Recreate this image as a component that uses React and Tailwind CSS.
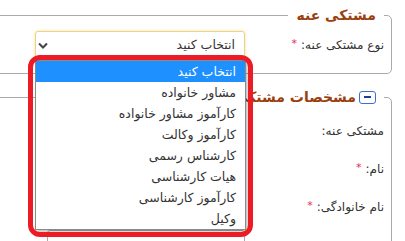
import React from 'react';

const options = [
  'انتخاب کنید',
  'مشاور خانواده',
  'کارآموز مشاور خانواده',
  'کارآموز وکالت',
  'کارشناس رسمی',
  'هیات کارشناسی',
  'کارآموز کارشناسی',
  'وکیل',
];

const Star = () => <span className="text-[#e8285a] text-[11px] mr-1 align-top">*</span>;

const Row = ({ label, required, children }) => (
  <div className="flex items-center h-[30px]">
    <div className="w-[139px] shrink-0 text-[12px] text-[#333]">
      {label}
      {required && <Star />}
    </div>
    {children}
  </div>
);

const App = () => {
  return (
    <div dir="rtl" className="relative w-[405px] h-[241px] overflow-hidden bg-white font-['DejaVu_Sans',sans-serif]">
      <div className="pt-[5px] pr-[13px] -ml-[20px]">
        {/* complainee type */}
        <fieldset className="border border-[#aaa] rounded-[5px] pr-[7px] pb-[14px]">
          <legend className="px-2 h-5 leading-5 text-[14px] font-bold text-[#9a400e]">مشتکی عنه</legend>
          <div className="mt-[6px] flex items-center h-[28px]">
            <div className="w-[139px] shrink-0 text-[12px] text-[#333]">
              نوع مشتکی عنه:
              <Star />
            </div>
            <div className="w-[210px] h-[28px] border border-[#e9d38f] rounded-[3px] shadow-[0_0_3px_#f7dc84] flex items-center justify-between pr-[9px] pl-[2px] text-[12.5px] text-[#333]">
              <span>انتخاب کنید</span>
              <svg width="10" height="7" viewBox="0 0 10 7" className="text-[#444]">
                <path d="M1 1.5 L5 5.5 L9 1.5" fill="none" stroke="currentColor" strokeWidth="2" />
              </svg>
            </div>
          </div>
        </fieldset>

        {/* complainee details */}
        <fieldset className="mt-[13px] border border-[#aaa] rounded-[5px] pr-[7px] pb-4">
          <legend className="px-2 h-5 flex items-center gap-[3px] text-[14px] font-bold text-[#9a400e]">
            <span className="w-[17px] h-[13px] border-[1.5px] border-[#3a6fd0] rounded-[3px] flex items-center justify-center">
              <span className="w-[7px] h-[2px] bg-[#1d3f8f]" />
            </span>
            مشخصات مشتکی عنه
          </legend>
          <div className="mt-[9px] flex flex-col gap-2">
            <Row label="مشتکی عنه:">
              <div className="w-[198px] h-[30px] border border-[#aaa] rounded-[3px]" />
            </Row>
            <Row label="نام:" required>
              <div className="w-[198px] h-[30px] border border-[#aaa] rounded-[3px]" />
            </Row>
            <Row label="نام خانوادگی:" required>
              <div className="w-[198px] h-[30px] border border-[#aaa] rounded-[3px]" />
            </Row>
            <Row label="">
              <div className="w-[198px] h-[30px] border border-[#aaa] rounded-[3px]" />
            </Row>
          </div>
        </fieldset>
      </div>

      {/* open dropdown list */}
      <div className="absolute left-[35px] top-[60px] w-[211px] border border-[#8a8a8a] bg-white shadow-[2px_2px_3px_rgba(0,0,0,0.25)]">
        {options.map((o, i) => (
          <div
            key={o}
            className={`h-[21px] leading-[21px] pr-[9px] text-[12.5px] ${i === 0 ? 'bg-[#1e90ff] text-white' : 'text-[#333]'}`}
          >
            {o}
          </div>
        ))}
      </div>

      {/* annotation */}
      <div className="absolute left-[28px] top-[55px] w-[225px] h-[182px] border-[5px] border-[#ed1c24] rounded-[12px]" />
    </div>
  );
};

export default App;
